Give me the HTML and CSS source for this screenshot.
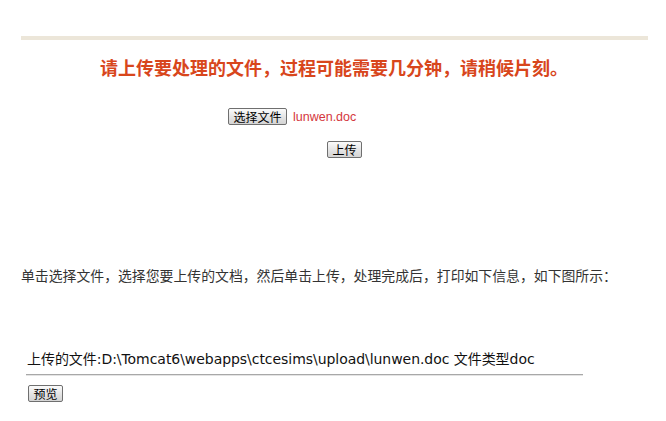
FILE: index.html
```html
<!DOCTYPE html>
<html lang="zh-CN">
<head>
<meta charset="utf-8">
<title>上传文件</title>
<link rel="stylesheet" href="styles.css">
</head>
<body>
<div class="page">
  <div class="bar"></div>
  <h2 class="title">请上传要处理的文件，过程可能需要几分钟，请稍候片刻。</h2>
  <div class="file-row">
    <button class="btn" type="button">选择文件</button>
    <span class="filename">lunwen.doc</span>
  </div>
  <div class="upload-row">
    <button class="btn" type="button">上传</button>
  </div>
  <p class="intro">单击选择文件，选择您要上传的文档，然后单击上传，处理完成后，打印如下信息，如下图所示：</p>
  <div class="result">
    <div class="path">上传的文件:D:\Tomcat6\webapps\ctcesims\upload\lunwen.doc 文件类型doc</div>
    <div class="rule"></div>
    <button class="btn preview" type="button">预览</button>
  </div>
</div>
</body>
</html>
```
FILE: styles.css
```css
html, body {
  margin: 0;
  padding: 0;
  background: #ffffff;
}
body {
  padding: 8px;
  font-family: "DejaVu Sans", "Noto Sans CJK SC", sans-serif;
  color: #222;
}
.page {
  margin-left: 13px;
  width: 627px;
}
.bar {
  margin-top: 28px;
  height: 4px;
  background: #ece6d9;
}
.title {
  margin: 15px 0 0 0;
  padding-left: 79px;
  font-family: "Noto Sans CJK SC", sans-serif;
  font-size: 18px;
  line-height: 24px;
  font-weight: bold;
  color: #d8461c;
  white-space: nowrap;
}
.btn {
  box-sizing: border-box;
  height: 17px;
  margin: 0;
  padding: 0 4.5px;
  font-family: "Noto Sans CJK SC", sans-serif;
  font-size: 12px;
  line-height: 15px;
  color: #000;
  border: 1px solid #6f6f6f;
  border-radius: 2px;
  background: linear-gradient(#fbfbfb, #e4e4e4 55%, #d4d4d4);
  vertical-align: top;
}
.file-row {
  margin-top: 29px;
  padding-left: 207px;
  height: 17px;
  display: flex;
  align-items: center;
  gap: 6px;
}
.filename {
  font-family: "Liberation Sans", sans-serif;
  font-size: 12.5px;
  color: #d4363c;
}
.upload-row {
  margin-top: 16px;
  padding-left: 306px;
  height: 17px;
  display: flex;
}
.intro {
  margin: 107px 0 0 0;
  font-family: "Noto Sans CJK SC", sans-serif;
  font-size: 13.86px;
  line-height: 20px;
  color: #333;
  white-space: nowrap;
}
.result {
  margin-top: 64px;
  margin-left: 5px;
  width: 557px;
}
.path {
  padding-left: 1px;
  font-size: 14px;
  letter-spacing: -0.05px;
  line-height: 20px;
  color: #111;
  white-space: nowrap;
}
.rule {
  margin-top: 5px;
  height: 1px;
  background: #a8a8a8;
  border-bottom: 1px solid #e4e4e4;
}
.preview {
  margin-top: 9px;
  margin-left: 2px;
}
```
